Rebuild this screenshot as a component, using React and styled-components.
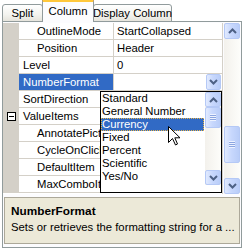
import React from "react";
import styled, { createGlobalStyle } from "styled-components";

const GlobalStyle = createGlobalStyle`
  html, body {
    margin: 0;
    padding: 0;
    background: #ffffff;
  }
  body {
    font-family: "Liberation Sans", Arial, sans-serif;
    font-size: 11.3px;
    color: #000;
  }
`;

const Window = styled.div`
  position: relative;
  width: 244px;
  height: 248px;
  box-sizing: border-box;
  padding: 0 2px 0 2px;
  display: flex;
  flex-direction: column;
  overflow: hidden;
`;

const TabStrip = styled.div`
  display: flex;
  align-items: flex-end;
  height: 22px;
  margin-bottom: -1px;
  position: relative;
  z-index: 2;
`;

const Tab = styled.div`
  box-sizing: border-box;
  width: ${({ $w }) => $w}px;
  height: ${({ $active }) => ($active ? 23 : 18)}px;
  margin: 0 ${({ $active }) => ($active ? -1 : 0)}px;
  display: flex;
  align-items: center;
  justify-content: center;
  padding-bottom: ${({ $active }) => ($active ? 3 : 0)}px;
  border: 1px solid #919b9c;
  border-bottom: ${({ $active }) => ($active ? "none" : "1px solid #919b9c")};
  border-top: ${({ $active }) => ($active ? "3px solid #ffc83c" : "1px solid #919b9c")};
  border-radius: 3px 3px 0 0;
  background: ${({ $active }) =>
    $active ? "#fcfcfe" : "linear-gradient(#ffffff, #f3f3ef 60%, #e6e4dc)"};
  box-shadow: ${({ $active }) => ($active ? "0 -1px 0 #e68b2c" : "none")};
  position: relative;
  z-index: ${({ $active }) => ($active ? 3 : 1)};
  white-space: nowrap;
`;

const Panel = styled.div`
  flex: 1;
  border: 1px solid #919b9c;
  background: #fcfcfe;
  display: flex;
  flex-direction: column;
  position: relative;
  z-index: 1;
`;

const GridArea = styled.div`
  position: relative;
  display: flex;
  height: 171px;
  margin-top: 1px;
`;

const Table = styled.div`
  width: 220px;
  display: flex;
  flex-direction: column;
  background: #ffffff;
  border-right: 1px solid #d4d0c8;
  box-sizing: border-box;
`;

const Row = styled.div`
  display: flex;
  height: 17px;
  box-sizing: border-box;
`;

const Gutter = styled.div`
  width: 15px;
  flex: none;
  background: #d4d0c8;
  display: flex;
  align-items: center;
  justify-content: center;
  padding-left: 1px;
`;

const Expander = styled.div`
  width: 7px;
  height: 7px;
  border: 1px solid #000;
  background: #fff;
  display: flex;
  align-items: center;
  justify-content: center;
  &::after {
    content: "";
    width: 5px;
    height: 1px;
    background: #000;
  }
`;

const NameCell = styled.div`
  width: 95px;
  flex: none;
  box-sizing: border-box;
  border-right: 1px solid #d4d0c8;
  border-bottom: 1px solid #d4d0c8;
  padding-left: ${({ $indent }) => ($indent ? 18 : 4)}px;
  line-height: 16px;
  white-space: nowrap;
  overflow: hidden;
  background: ${({ $selected }) => ($selected ? "#316ac5" : "#ffffff")};
  color: ${({ $selected }) => ($selected ? "#ffffff" : "#000")};
`;

const ValueCell = styled.div`
  flex: 1;
  box-sizing: border-box;
  border-bottom: 1px solid #d4d0c8;
  padding-left: 3px;
  line-height: 16px;
  white-space: nowrap;
  overflow: hidden;
  display: flex;
  justify-content: space-between;
`;

const XPButton = styled.div`
  box-sizing: border-box;
  width: ${({ $w }) => $w || 16}px;
  height: ${({ $h }) => $h || 16}px;
  flex: none;
  border: 1px solid #b5c9f6;
  border-radius: 2px;
  background: linear-gradient(to right, #e1eafe, #c8d8fd 45%, #b9cdf8);
  display: flex;
  align-items: center;
  justify-content: center;
`;

const ComboButton = styled(XPButton)`
  margin-right: 1px;
`;

const ScrollBar = styled.div`
  width: 16px;
  margin-left: 1px;
  background: linear-gradient(to right, #f3f1ec, #fdfdfa);
  display: flex;
  flex-direction: column;
  align-self: ${({ $short }) => ($short ? "flex-start" : "stretch")};
  height: ${({ $short }) => ($short ? "93px" : "auto")};
`;

const Track = styled.div`
  height: ${({ $h }) => $h}px;
  flex: ${({ $grow }) => ($grow ? 1 : "none")};
`;

const Grip = styled.div`
  width: 6px;
  height: 7px;
  background: repeating-linear-gradient(
    #eef3ff 0px,
    #eef3ff 1px,
    #8ca6e0 1px,
    #8ca6e0 2px
  );
`;

const Popup = styled.div`
  position: absolute;
  left: 97px;
  top: 68px;
  width: 122px;
  height: 102px;
  box-sizing: border-box;
  border: 1px solid #000;
  background: #fff;
  display: flex;
  z-index: 4;
`;

const ItemList = styled.div`
  width: 104px;
  display: flex;
  flex-direction: column;
`;

const Item = styled.div`
  height: 13px;
  line-height: 13px;
  padding-left: 1px;
  box-sizing: border-box;
  white-space: nowrap;
  overflow: hidden;
  background: ${({ $hot }) => ($hot ? "#316ac5" : "transparent")};
  color: ${({ $hot }) => ($hot ? "#fff" : "#000")};
  outline: ${({ $hot }) => ($hot ? "1px dotted #e7b34a" : "none")};
  outline-offset: -1px;
`;

const Cursor = styled.svg`
  position: absolute;
  left: 67px;
  top: 34px;
  z-index: 5;
`;

const Help = styled.div`
  margin: 3px 1px 2px 1px;
  height: 47px;
  box-sizing: border-box;
  border: 1px solid #aca899;
  background: #ece9d8;
  padding: 5px 0 0 6px;
  line-height: 16px;
  white-space: nowrap;
  overflow: hidden;
`;

const HelpTitle = styled.div`
  font-weight: bold;
  font-size: 11.8px;
`;

const Chevron = ({ up }) => (
  <svg width="9" height="6" viewBox="0 0 9 6">
    <path
      d={up ? "M1 5 L4.5 1.5 L8 5" : "M1 1 L4.5 4.5 L8 1"}
      fill="none"
      stroke="#4d6185"
      strokeWidth="2"
    />
  </svg>
);

const rows = [
  { name: "OutlineMode", value: "StartCollapsed", indent: true },
  { name: "Position", value: "Header", indent: true },
  { name: "Level", value: "0" },
  { name: "NumberFormat", selected: true, combo: true },
  { name: "SortDirection" },
  { name: "ValueItems", expander: true },
  { name: "AnnotatePicture", indent: true },
  { name: "CycleOnClick", indent: true },
  { name: "DefaultItem", indent: true },
  { name: "MaxComboItems", indent: true },
];

const items = ["Standard", "General Number", "Currency", "Fixed", "Percent", "Scientific", "Yes/No"];

export default function App() {
  return (
    <>
      <GlobalStyle />
      <Window>
        <TabStrip>
          <Tab $w={41}>Split</Tab>
          <Tab $w={52} $active>Column</Tab>
          <Tab $w={79}>Display Column</Tab>
        </TabStrip>
        <Panel>
          <GridArea>
            <Table>
              {rows.map((r) => (
                <Row key={r.name}>
                  <Gutter>{r.expander && <Expander />}</Gutter>
                  <NameCell $indent={r.indent} $selected={r.selected}>
                    {r.name}
                  </NameCell>
                  <ValueCell>
                    <span>{r.value}</span>
                    {r.combo && (
                      <ComboButton $w={15} $h={16}>
                        <Chevron />
                      </ComboButton>
                    )}
                  </ValueCell>
                </Row>
              ))}
            </Table>
            <ScrollBar>
              <XPButton>
                <Chevron up />
              </XPButton>
              <Track $h={87} />
              <XPButton $h={37}>
                <Grip />
              </XPButton>
              <Track $grow />
              <XPButton>
                <Chevron />
              </XPButton>
            </ScrollBar>
            <Popup>
              <ItemList>
                {items.map((it) => (
                  <Item key={it} $hot={it === "Currency"}>
                    {it}
                  </Item>
                ))}
              </ItemList>
              <ScrollBar $short>
                <XPButton $h={15}>
                  <Chevron up />
                </XPButton>
                <XPButton $h={21}>
                  <Grip />
                </XPButton>
                <Track $grow />
                <XPButton $h={15}>
                  <Chevron />
                </XPButton>
              </ScrollBar>
              <Cursor width="13" height="20" viewBox="0 0 13 20">
                <path
                  d="M0.5 0.5 L0.5 16.5 L4.5 12.5 L7.5 19 L9.5 18 L6.8 11.8 L12 11.8 Z"
                  fill="#fff"
                  stroke="#000"
                  strokeWidth="1"
                />
              </Cursor>
            </Popup>
          </GridArea>
          <Help>
            <HelpTitle>NumberFormat</HelpTitle>
            <div>Sets or retrieves the formatting string for a ...</div>
          </Help>
        </Panel>
      </Window>
    </>
  );
}
